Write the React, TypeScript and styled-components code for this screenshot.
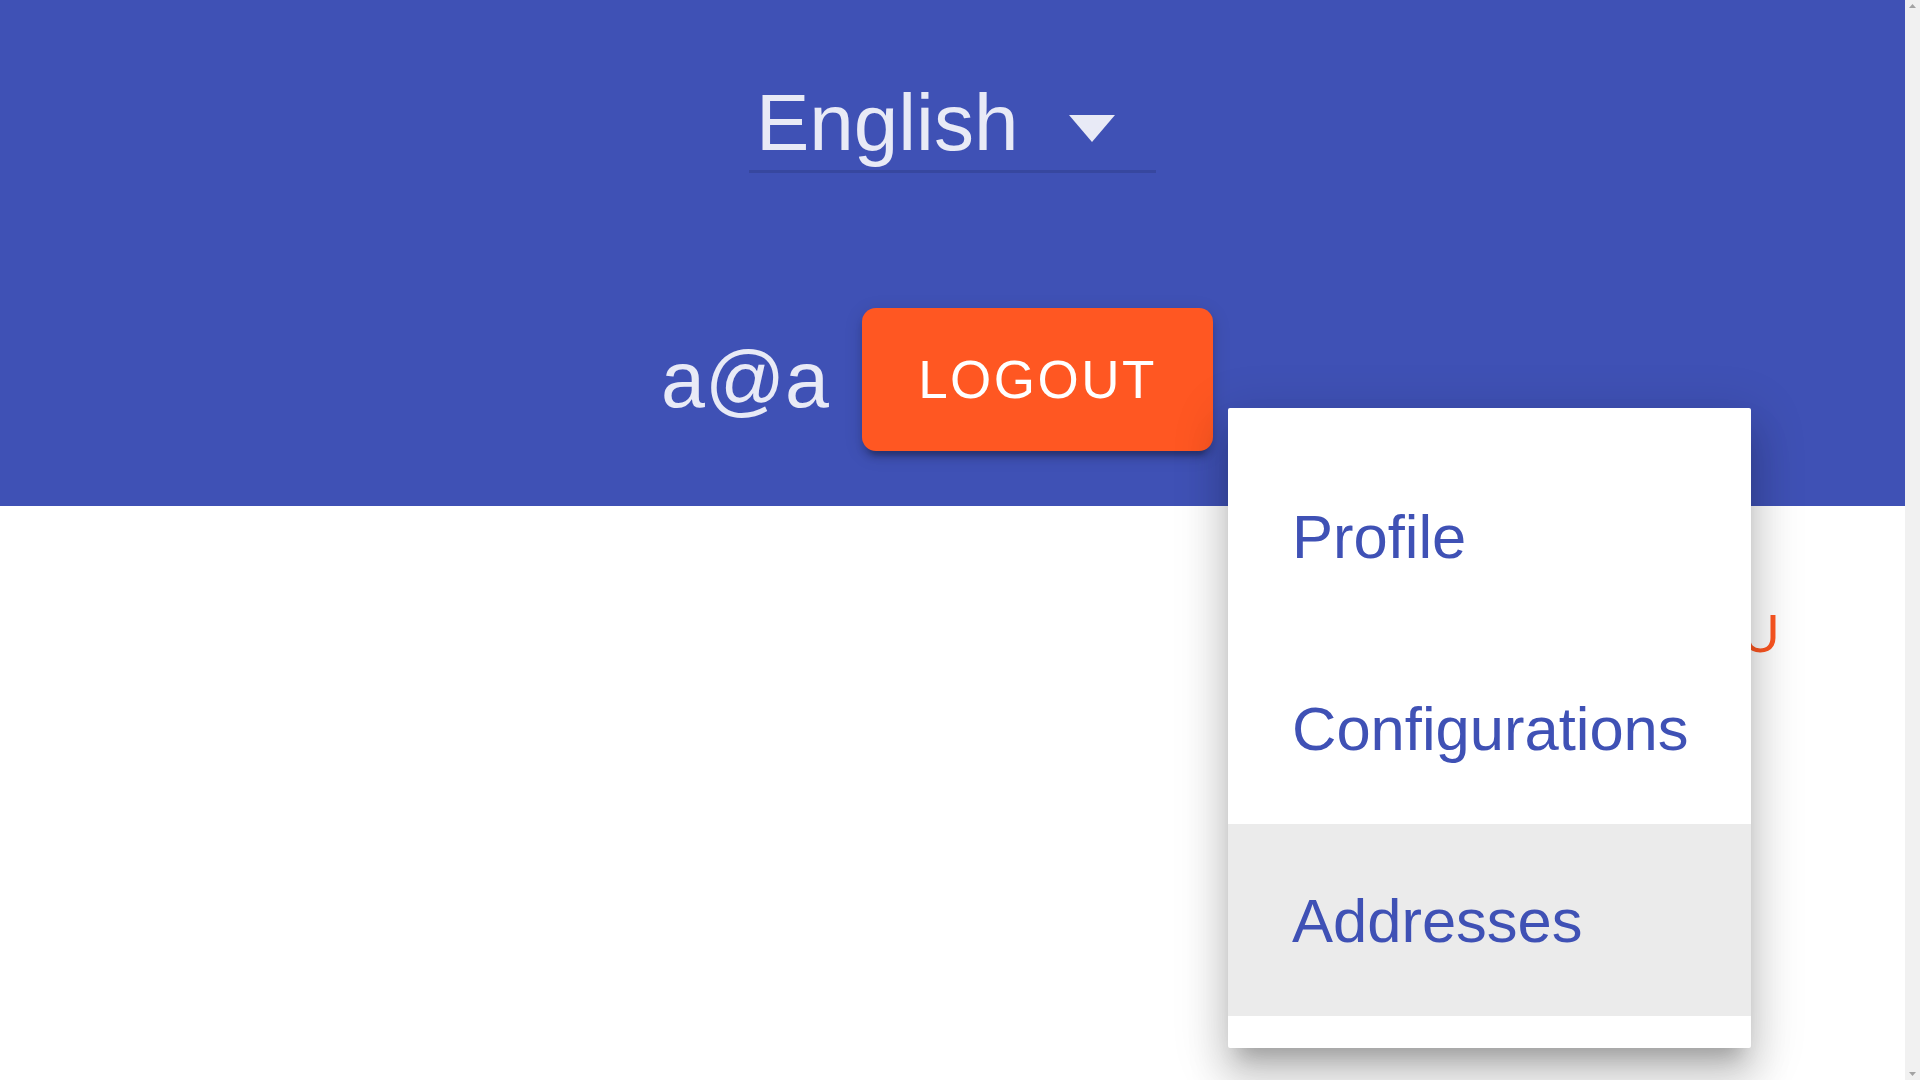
import React from 'react';
import styled, { createGlobalStyle } from 'styled-components';

const GlobalStyle = createGlobalStyle`
  body {
    margin: 0;
    background: #ffffff;
    font-family: "Liberation Sans", Arial, sans-serif;
    overflow: hidden;
  }
`;

const Page = styled.div`
  position: relative;
  display: flex;
  height: 1080px;
`;

const Main = styled.div`
  flex: 1;
  min-width: 0;
`;

const ScrollTrack = styled.div`
  width: 15px;
  background: #f1f1f1;
  display: flex;
  flex-direction: column;
  justify-content: space-between;
  align-items: center;
  padding: 4px 0;
  box-sizing: border-box;
`;

const Header = styled.header`
  background: #3f51b5;
  display: flex;
  flex-direction: column;
  align-items: center;
  padding: 76px 0 55px;
`;

const LangSelect = styled.div`
  width: 407px;
  box-sizing: border-box;
  display: flex;
  align-items: center;
  justify-content: space-between;
  padding: 0 41px 0 7px;
  border-bottom: 3px solid rgba(0, 0, 0, 0.12);
  color: #e8eaf6;
  font-size: 80px;
  line-height: 94px;
  cursor: pointer;

  svg {
    margin-top: 10px;
  }
`;

const UserRow = styled.div`
  margin-top: 135px;
  display: flex;
  align-items: center;
  gap: 33px;
  padding-right: 31px;
`;

const UserName = styled.span`
  color: #e8eaf6;
  font-size: 79px;
`;

const LogoutButton = styled.button`
  width: 351px;
  height: 143px;
  border: none;
  border-radius: 14px;
  background: #ff5722;
  color: #ffffff;
  font-family: inherit;
  font-size: 53px;
  letter-spacing: 2.5px;
  text-transform: uppercase;
  box-shadow: 0 11px 4px -7px rgba(0, 0, 0, 0.2),
    0 7px 7px 0 rgba(0, 0, 0, 0.14), 0 4px 19px 0 rgba(0, 0, 0, 0.12);
  cursor: pointer;
`;

const Content = styled.main`
  display: flex;
  justify-content: flex-end;
  padding: 60px 94px 0 0;
`;

const TextButton = styled.button`
  border: none;
  background: transparent;
  color: #ff5722;
  font-family: inherit;
  font-size: 53px;
  line-height: 1.75;
  letter-spacing: 1.5px;
  padding: 22px 30px;
  text-transform: uppercase;
  cursor: pointer;
`;

const MenuPanel = styled.ul`
  position: absolute;
  left: 1228px;
  top: 408px;
  width: 523px;
  margin: 0;
  padding: 32px 0;
  list-style: none;
  background: #ffffff;
  border-radius: 2px;
  box-shadow: 0 19px 19px -11px rgba(0, 0, 0, 0.2),
    0 30px 38px 4px rgba(0, 0, 0, 0.14), 0 11px 52px 8px rgba(0, 0, 0, 0.12);
`;

const MenuItem = styled.li<{ $active?: boolean }>`
  height: 192px;
  display: flex;
  align-items: center;
  padding-left: 64px;
  font-size: 61.5px;
  color: #3f51b5;
  background: ${(p) => (p.$active ? '#ebebeb' : 'transparent')};
  cursor: pointer;
`;

const items = ['Profile', 'Configurations', 'Addresses'];

const App = (): JSX.Element => {
  return (
    <Page>
      <GlobalStyle />
      <Main>
        <Header>
          <LangSelect>
            <span>English</span>
            <svg width="46" height="27" viewBox="0 0 46 27">
              <polygon points="0,0 46,0 23,27" fill="#e8eaf6" />
            </svg>
          </LangSelect>
          <UserRow>
            <UserName>a@a</UserName>
            <LogoutButton>Logout</LogoutButton>
          </UserRow>
        </Header>
        <Content>
          <TextButton>Menu</TextButton>
        </Content>
      </Main>
      <ScrollTrack>
        <svg width="7" height="4" viewBox="0 0 7 4">
          <polygon points="3.5,0 7,4 0,4" fill="#a3a3a3" />
        </svg>
        <svg width="7" height="4" viewBox="0 0 7 4">
          <polygon points="0,0 7,0 3.5,4" fill="#a3a3a3" />
        </svg>
      </ScrollTrack>
      <MenuPanel>
        {items.map((label) => (
          <MenuItem key={label} $active={label === 'Addresses'}>
            {label}
          </MenuItem>
        ))}
      </MenuPanel>
    </Page>
  );
};

export default App;
